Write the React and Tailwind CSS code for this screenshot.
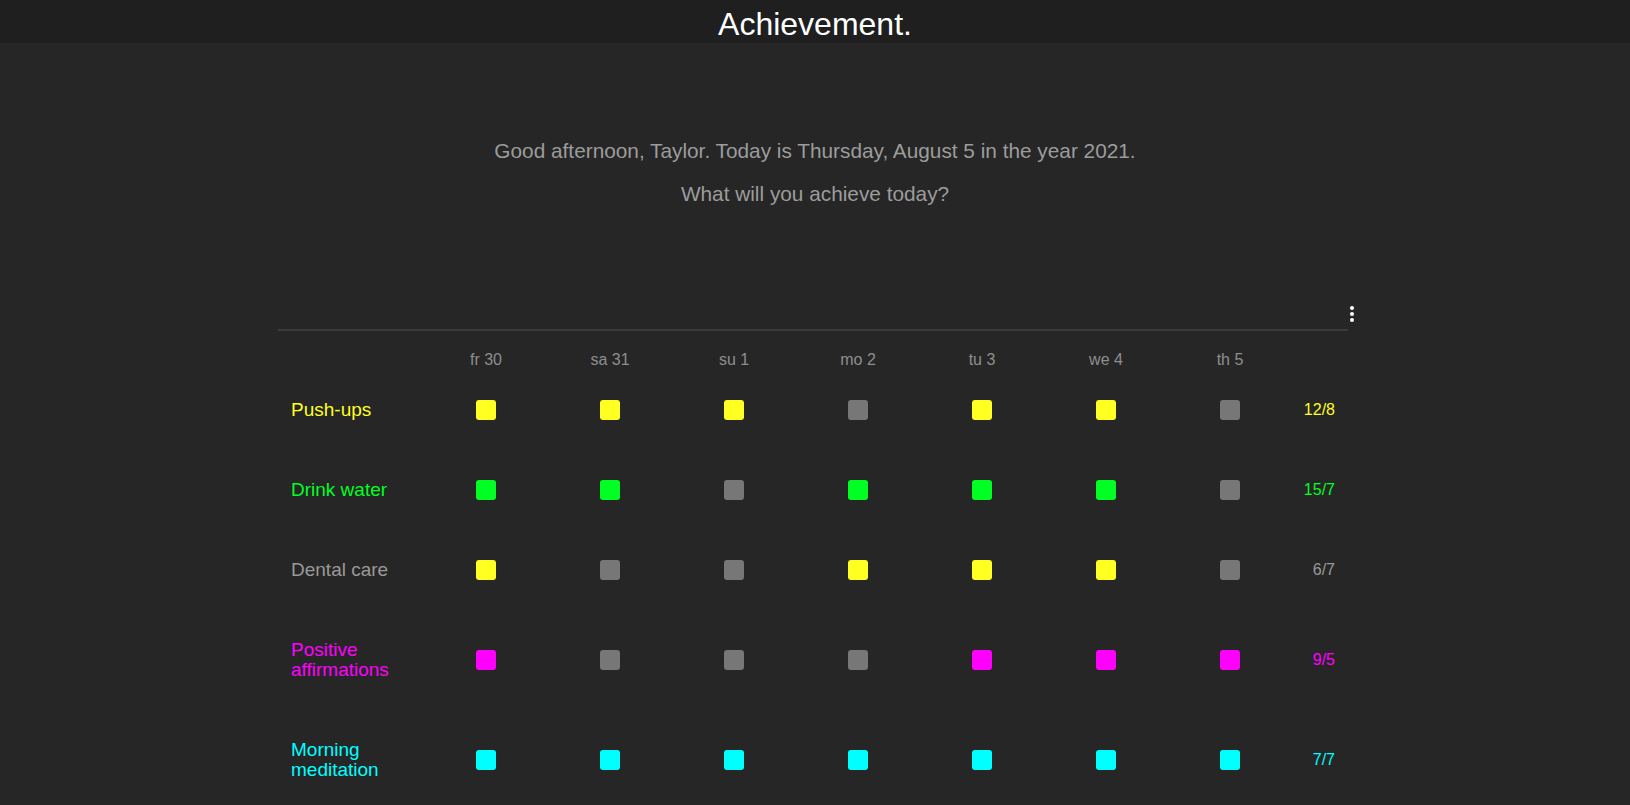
import React from "react";

const Y = "bg-[#ffff22]";
const G = "bg-[#00ff22]";
const M = "bg-[#ff00ff]";
const C = "bg-[#00ffff]";
const X = "bg-[#777777]";

const days = ["fr 30", "sa 31", "su 1", "mo 2", "tu 3", "we 4", "th 5"];

const habits = [
  { name: "Push-ups", text: "text-[#ffff22]", cells: [Y, Y, Y, X, Y, Y, X], count: "12/8" },
  { name: "Drink water", text: "text-[#00ff22]", cells: [G, G, X, G, G, G, X], count: "15/7" },
  { name: "Dental care", text: "text-[#999999]", cells: [Y, X, X, Y, Y, Y, X], count: "6/7" },
  { name: "Positive affirmations", text: "text-[#ff00ff]", cells: [M, X, X, X, M, M, M], count: "9/5" },
  { name: "Morning meditation", text: "text-[#00ffff]", cells: [C, C, C, C, C, C, C], count: "7/7" },
];

export default function App() {
  return (
    <div
      className="min-h-[805px] bg-[#262626]"
      style={{ fontFamily: '"Liberation Sans", Arial, Helvetica, sans-serif' }}
    >
      <div className="box-border h-[43px] overflow-hidden bg-[#1f1f1f] pt-[4px] text-center text-[32px] leading-[40px] text-white">
        Achievement.
      </div>

      <div className="pt-[96px] text-center text-[20.8px] leading-[24px] text-[#9c9c9c]">
        <p>Good afternoon, Taylor. Today is Thursday, August 5 in the year 2021.</p>
        <p className="mt-[19px]">What will you achieve today?</p>
      </div>

      <div className="mx-auto mt-[100px] w-[1074px]">
        <div className="flex justify-end">
          <div className="-mr-[2px] flex w-[4px] flex-col gap-[2px]">
            <span className="h-[4px] w-[4px] rounded-full bg-white" />
            <span className="h-[4px] w-[4px] rounded-full bg-white" />
            <span className="h-[4px] w-[4px] rounded-full bg-white" />
          </div>
        </div>
        <div className="mt-[7px] h-[2px] w-[1070px] bg-[#3a3a3a]" />

        <div className="grid w-[1070px] grid-cols-[146px_repeat(7,124px)_1fr]">
          <div className="pt-[20px] pb-[1px]" />
          {days.map((d) => (
            <div
              key={d}
              className="pt-[20px] pb-[1px] text-center text-[16px] leading-[18px] text-[#8e8e8e]"
            >
              {d}
            </div>
          ))}
          <div className="pt-[20px] pb-[1px]" />

          {habits.map((h) => (
            <React.Fragment key={h.name}>
              <div
                className={`flex items-center py-[30px] pl-[13px] pr-[10px] text-[19px] leading-[20px] ${h.text}`}
              >
                {h.name}
              </div>
              {h.cells.map((c, i) => (
                <div key={i} className="flex items-center justify-center py-[30px]">
                  <span className={`block h-[20px] w-[20px] rounded-[3px] ${c}`} />
                </div>
              ))}
              <div
                className={`flex items-center justify-end py-[30px] pr-[13px] text-[16px] leading-[20px] ${h.text}`}
              >
                {h.count}
              </div>
            </React.Fragment>
          ))}
        </div>
      </div>
    </div>
  );
}
